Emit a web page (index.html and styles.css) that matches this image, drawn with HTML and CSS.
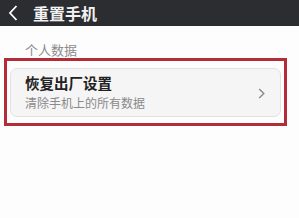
FILE: index.html
```html
<!DOCTYPE html>
<html lang="zh-CN">
<head>
    <meta charset="UTF-8">
    <meta name="viewport" content="width=device-width, initial-scale=1.0">
    <title>重置手机</title>
    <link rel="stylesheet" href="styles.css">
</head>
<body>
    <div class="topbar">
        <svg class="back" width="10" height="16" viewBox="0 0 10 16">
            <path d="M8.5 1 L2 8 L8.5 15" fill="none" stroke="#ffffff" stroke-width="1.8"/>
        </svg>
        <span class="title">重置手机</span>
    </div>

    <div class="section-label">个人数据</div>

    <!-- highlighted item -->
    <div class="highlight">
        <div class="item">
            <div class="item-text">
                <div class="item-title">恢复出厂设置</div>
                <div class="item-sub">清除手机上的所有数据</div>
            </div>
            <svg class="chevron" width="7" height="11" viewBox="0 0 7 11">
                <path d="M1.2 1 L5.8 5.5 L1.2 10" fill="none" stroke="#8a8a8a" stroke-width="1.4"/>
            </svg>
        </div>
    </div>
</body>
</html>
```

FILE: styles.css
```css
body {
    margin: 0;
    background-color: #fdfdfd;
    font-family: "Noto Sans CJK SC", "Noto Sans", sans-serif;
}
.topbar {
    height: 26px;
    background-color: #2b2d31;
    display: flex;
    align-items: center;
    padding-left: 8px;
}
.back {
    margin-right: 15px;
}
.title {
    color: #f2f2f2;
    font-size: 16px;
    font-weight: bold;
    line-height: 26px;
}
.section-label {
    padding: 16px 0 0 25px;
    font-size: 13px;
    line-height: 16px;
    color: #8c8c8c;
    height: 16px;
}
.highlight {
    margin: 0 12px 0 4px;
    border: 3px solid #b22d38;
    padding: 7px 3px 6px 3px;
}
.item {
    height: 47px;
    border: 1px solid #e2e2e2;
    border-radius: 7px;
    background-color: #f5f5f5;
    display: flex;
    align-items: center;
    padding: 0 15px 0 14px;
}
.item-text {
    flex: 1;
}
.item-title {
    font-size: 14.5px;
    font-weight: bold;
    line-height: 18px;
    color: #222222;
}
.item-sub {
    font-size: 12px;
    line-height: 16px;
    margin-top: 3px;
    color: #8a8a8a;
}
.chevron {
    margin-top: 2px;
}
```
